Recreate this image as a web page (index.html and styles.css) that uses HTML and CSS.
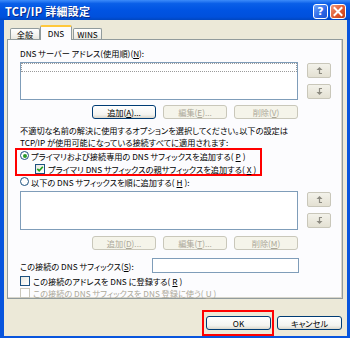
FILE: index.html
```html
<!DOCTYPE html>
<html lang="ja">
<head>
    <meta charset="UTF-8">
    <title>TCP/IP 詳細設定</title>
    <link rel="stylesheet" href="styles.css">
</head>
<body>
    <div class="window">
        <div class="titlebar">
            <span class="title">TCP/IP 詳細設定</span>
            <span class="caption-btns">
                <span class="cap-btn help">?</span>
                <span class="cap-btn close">
                    <svg width="16" height="15" viewBox="0 0 16 15"><path d="M4.5 4 L11.5 11 M11.5 4 L4.5 11" stroke="#fff" stroke-width="2" stroke-linecap="square"/></svg>
                </span>
            </span>
        </div>

        <div class="client">
            <div class="tabs">
                <div class="tab">全般</div>
                <div class="tab active">DNS</div>
                <div class="tab wins">WINS</div>
            </div>

            <div class="panel">
                <div class="line">DNS サーバー アドレス(使用順)(<u>N</u>):</div>

                <div class="list-row">
                    <div class="listbox"><div class="focus-item"></div></div>
                    <div class="order-btns">
                        <span class="order-btn">
                            <svg width="7" height="9" viewBox="0 0 7 9"><path d="M0.5 4 L3.5 1 L6.5 4 Z" fill="#8c8a80"/><path d="M3.5 3 V7.5 H6" stroke="#8c8a80" stroke-width="1.2" fill="none"/></svg>
                        </span>
                        <span class="order-btn">
                            <svg width="7" height="9" viewBox="0 0 7 9"><path d="M0.5 5 L3.5 8 L6.5 5 Z" fill="#8c8a80"/><path d="M3.5 6 V1.5 H6" stroke="#8c8a80" stroke-width="1.2" fill="none"/></svg>
                        </span>
                    </div>
                </div>

                <div class="btn-row">
                    <button class="btn">追加(<u>A</u>)...</button>
                    <button class="btn" disabled>編集(<u>E</u>)...</button>
                    <button class="btn" disabled>削除(<u>V</u>)</button>
                </div>

                <p class="desc">不適切な名前の解決に使用するオプションを選択してください。以下の設定は<br>TCP/IP が使用可能になっている接続すべてに適用されます:</p>

                <div class="highlight">
                    <div class="opt"><span class="radio checked"></span>プライマリおよび接続専用の DNS サフィックスを追加する(<u>P</u>)</div>
                    <div class="opt sub"><span class="check"><svg width="8" height="8" viewBox="0 0 8 8"><path d="M1.3 3.8 L3.2 5.8 L6.8 1.8" stroke="#21a121" stroke-width="1.7" fill="none"/></svg></span>プライマリ DNS サフィックスの親サフィックスを追加する(<u>X</u>)</div>
                </div>
                <div class="opt"><span class="radio"></span>以下の DNS サフィックスを順に追加する(<u>H</u>):</div>

                <div class="list-row second">
                    <div class="listbox tall"></div>
                    <div class="order-btns">
                        <span class="order-btn">
                            <svg width="7" height="9" viewBox="0 0 7 9"><path d="M0.5 4 L3.5 1 L6.5 4 Z" fill="#8c8a80"/><path d="M3.5 3 V7.5 H6" stroke="#8c8a80" stroke-width="1.2" fill="none"/></svg>
                        </span>
                        <span class="order-btn">
                            <svg width="7" height="9" viewBox="0 0 7 9"><path d="M0.5 5 L3.5 8 L6.5 5 Z" fill="#8c8a80"/><path d="M3.5 6 V1.5 H6" stroke="#8c8a80" stroke-width="1.2" fill="none"/></svg>
                        </span>
                    </div>
                </div>

                <div class="btn-row second">
                    <button class="btn" disabled>追加(<u>D</u>)...</button>
                    <button class="btn" disabled>編集(<u>T</u>)...</button>
                    <button class="btn" disabled>削除(<u>M</u>)</button>
                </div>

                <div class="suffix-row">
                    <span>この接続の DNS サフィックス(<u>S</u>):</span>
                    <span class="textbox"></span>
                </div>

                <div class="opt small first"><span class="check"></span>この接続のアドレスを DNS に登録する(<u>R</u>)</div>
                <div class="opt small disabled"><span class="check"></span>この接続の DNS サフィックスを DNS 登録に使う(<u>U</u>)</div>
            </div>

            <div class="footer">
                <span class="highlight-btn"><button class="btn wide">OK</button></span>
                <button class="btn wide">キャンセル</button>
            </div>
        </div>
    </div>
</body>
</html>
```

FILE: styles.css
```css
body {
    margin: 0;
    padding: 0;
    font-family: "Noto Sans CJK JP", sans-serif;
    font-size: 8.2px;
    font-feature-settings: "palt";
    color: #000;
    background-color: #0855dd;
}

u {
    text-decoration: underline;
    text-underline-offset: 1px;
}

.window {
    width: 350px;
    height: 338px;
    display: flex;
    flex-direction: column;
    background-color: #0855dd;
}

.titlebar {
    height: 21px;
    display: flex;
    align-items: flex-start;
    justify-content: space-between;
    background: linear-gradient(#3d8cfa 0%, #0a5fe8 18%, #0054e3 50%, #0050dc 85%, #0046c0 100%);
}

.title {
    margin: 4px 0 0 5px;
    color: #fff;
    font-weight: bold;
    font-size: 11px;
    line-height: 14px;
    letter-spacing: 0.3px;
    text-shadow: 1px 1px 0 #0a2a88;
}

.caption-btns {
    display: flex;
    gap: 2px;
    margin: 4px 4px 0 0;
}

.cap-btn {
    width: 15px;
    height: 15px;
    box-sizing: border-box;
    border: 1px solid #fff;
    border-radius: 3px;
    display: flex;
    align-items: center;
    justify-content: center;
}

.cap-btn.help {
    background: linear-gradient(135deg, #6fa4fb, #2a66e6 60%, #1f55d0);
    color: #fff;
    font-family: "DejaVu Sans", sans-serif;
    font-weight: bold;
    font-size: 11px;
}

.cap-btn.close {
    width: 16px;
    background: linear-gradient(135deg, #f09a7c, #e05a30 55%, #c43d14);
}

.cap-btn.close svg {
    margin: -1px;
}

.client {
    flex: 1;
    margin: 0 3px 2px 4px;
    background-color: #ece9d8;
    display: flex;
    flex-direction: column;
}

.tabs {
    display: flex;
    align-items: flex-end;
    height: 15px;
    margin: 5px 0 0 6px;
    position: relative;
    z-index: 1;
    margin-bottom: -1px;
}

.tab {
    width: 30px;
    height: 11px;
    box-sizing: border-box;
    margin-bottom: 1px;
    border: 1px solid #919b9c;
    border-bottom: none;
    border-radius: 2px 2px 0 0;
    background: linear-gradient(#ffffff, #f3f3ef 60%, #e8e7df);
    text-align: center;
    line-height: 10px;
}

.tab.active {
    width: 32px;
    height: 15px;
    margin-bottom: 0;
    border-top: 2px solid #ffc83c;
    background: #fcfcfe;
    line-height: 13px;
}

.tab.wins {
    width: 29px;
    margin-left: 1px;
}

.panel {
    height: 260px;
    box-sizing: border-box;
    margin: 0 4px 0 3px;
    padding: 8px 0 0 12px;
    border: 1px solid #919b9c;
    background-color: #fcfcfe;
    box-shadow: inset -1px -1px 0 #d8d6cc;
}

.line {
    line-height: 10px;
    margin-bottom: 4px;
}

.list-row {
    display: flex;
    gap: 9px;
}

.listbox {
    width: 278px;
    height: 38px;
    box-sizing: border-box;
    border: 1px solid #7f9db9;
    background-color: #fff;
}

.listbox.tall {
    height: 39px;
}

.focus-item {
    height: 7px;
    border: 1px dotted #9a9a9a;
}

.order-btns {
    display: flex;
    flex-direction: column;
    gap: 6px;
    padding-top: 1px;
}

.order-btn {
    width: 24px;
    height: 15px;
    box-sizing: border-box;
    border: 1px solid #c9c7ba;
    border-radius: 2px;
    background: linear-gradient(#f3f2ea, #e4e1d3);
    display: flex;
    align-items: center;
    justify-content: center;
}

.btn-row {
    width: 278px;
    display: flex;
    justify-content: flex-end;
    gap: 7px;
    margin-top: 5px;
}

.btn-row.second {
    margin-top: 6px;
}

.btn {
    width: 64px;
    height: 14px;
    padding: 0;
    box-sizing: border-box;
    border: 1px solid #003c74;
    border-radius: 3px;
    background: linear-gradient(#ffffff, #f4f4f0 70%, #dcd8cc);
    font-family: inherit;
    font-size: inherit;
    font-feature-settings: inherit;
    line-height: 11px;
    color: #000;
}

.btn:disabled {
    border-color: #c9c7ba;
    background: #f5f4ea;
    color: #aca899;
}

.btn.wide {
    width: 65px;
}

.desc {
    margin: 5px 0 0 0;
    line-height: 12px;
}

.highlight {
    width: fit-content;
    margin-left: -5px;
    padding: 0 4px 0 3px;
    border: 2px solid #ff0000;
    display: flex;
    flex-direction: column;
    gap: 2px;
}

.opt {
    height: 11px;
    display: flex;
    align-items: center;
    gap: 2px;
    white-space: nowrap;
}

.opt.sub {
    padding-left: 15px;
}

.opt.small {
    height: 12px;
}

.opt.first {
    margin-top: 2px;
}

.opt.disabled {
    color: #aca899;
}

.radio {
    width: 9px;
    height: 9px;
    box-sizing: border-box;
    border: 1px solid #1c5180;
    border-radius: 50%;
    background: #fff;
    display: flex;
    align-items: center;
    justify-content: center;
}

.radio.checked::after {
    content: "";
    width: 4px;
    height: 4px;
    border-radius: 50%;
    background: #2b9a2b;
}

.check {
    width: 10px;
    height: 10px;
    box-sizing: border-box;
    border: 1px solid #1c5180;
    background: linear-gradient(135deg, #e8e8e0, #ffffff);
    display: flex;
    align-items: center;
    justify-content: center;
    margin-right: 1px;
}

.opt.disabled .check {
    border-color: #cac8bb;
    background: #fff;
}

.list-row.second {
    margin-top: 4px;
}

.suffix-row {
    width: 279px;
    margin-top: 8px;
    display: flex;
    align-items: center;
    justify-content: space-between;
}

.textbox {
    width: 147px;
    height: 15px;
    box-sizing: border-box;
    border: 1px solid #7f9db9;
    background-color: #fff;
}

.footer {
    margin-top: 11px;
    padding-right: 5px;
    display: flex;
    justify-content: flex-end;
    align-items: center;
    gap: 3px;
}

.highlight-btn {
    display: flex;
    padding: 4px 1px 4px 2px;
    border: 2px solid #ff0000;
}
```
